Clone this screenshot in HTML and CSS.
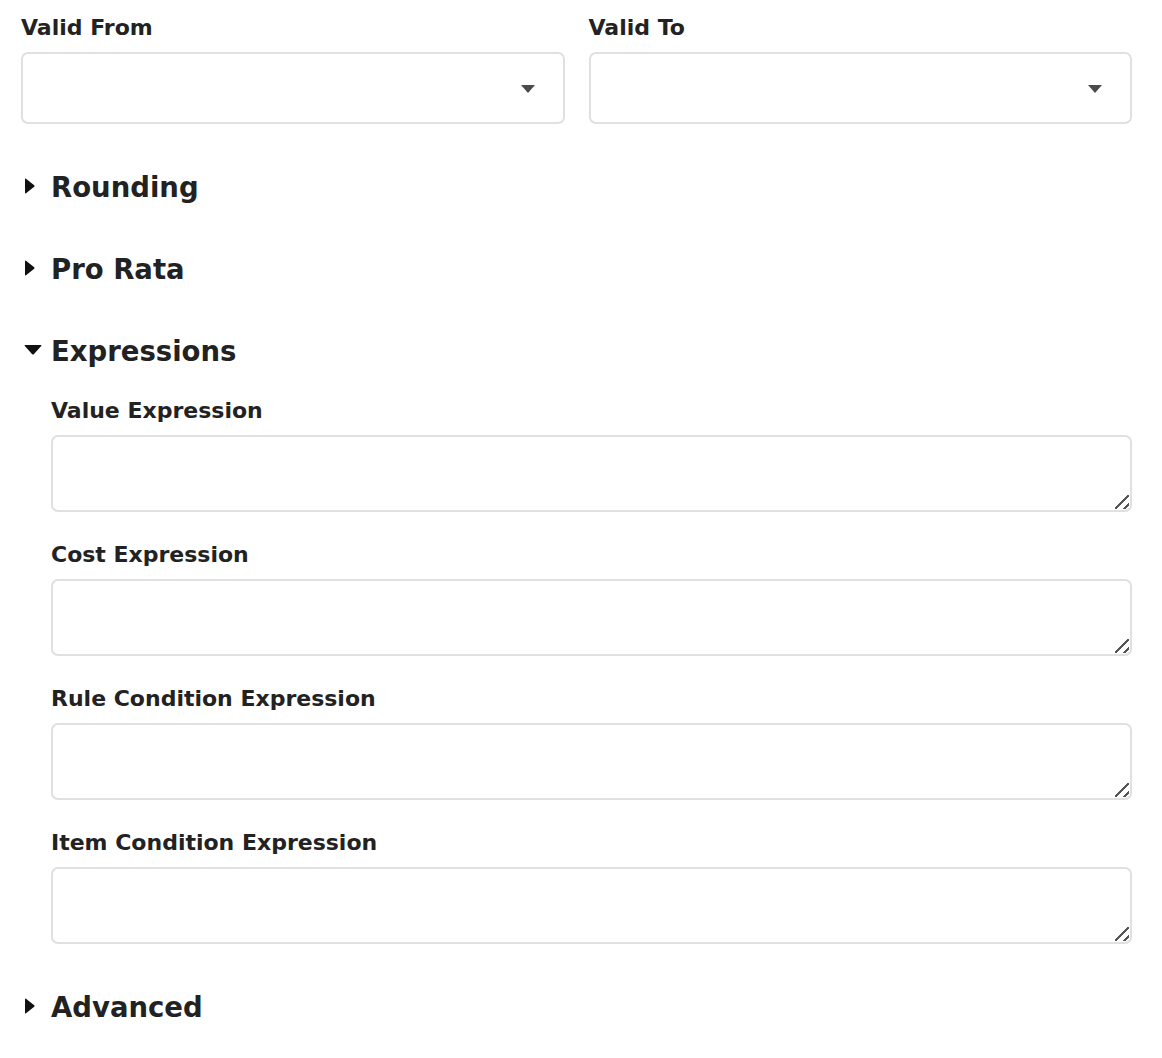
FILE: index.html
```html
<!DOCTYPE html>
<html lang="en">
<head>
<meta charset="utf-8">
<title>Rule form</title>
<link rel="stylesheet" href="styles.css">
</head>
<body>
<div class="form">
  <div class="row">
    <div class="field">
      <label class="label">Valid From</label>
      <div class="select"><svg class="caret" width="14" height="8" viewBox="0 0 14 8"><path d="M0 0H14L7 8Z" fill="#4a4a4a"/></svg></div>
    </div>
    <div class="field">
      <label class="label">Valid To</label>
      <div class="select"><svg class="caret" width="14" height="8" viewBox="0 0 14 8"><path d="M0 0H14L7 8Z" fill="#4a4a4a"/></svg></div>
    </div>
  </div>

  <div class="section">
    <div class="summary"><span class="tri"><svg width="11" height="16" viewBox="0 0 11 16"><path d="M1 1.2Q1 0 2 0.8L10.2 7.2Q11 8 10.2 8.8L2 15.2Q1 16 1 14.8Z" fill="#111"/></svg></span><span class="title">Rounding</span></div>
  </div>

  <div class="section">
    <div class="summary"><span class="tri"><svg width="11" height="16" viewBox="0 0 11 16"><path d="M1 1.2Q1 0 2 0.8L10.2 7.2Q11 8 10.2 8.8L2 15.2Q1 16 1 14.8Z" fill="#111"/></svg></span><span class="title">Pro Rata</span></div>
  </div>

  <div class="section">
    <div class="summary"><span class="tri"><svg width="18" height="10" viewBox="0 0 18 10"><path d="M1.2 0H16.8Q18 0 17.2 0.9L9.8 9.2Q9 10 8.2 9.2L0.8 0.9Q0 0 1.2 0Z" fill="#111"/></svg></span><span class="title">Expressions</span></div>
    <div class="content">
      <div class="field">
        <label class="label">Value Expression</label>
        <div class="textarea"><span class="grip"></span></div>
      </div>
      <div class="field">
        <label class="label">Cost Expression</label>
        <div class="textarea"><span class="grip"></span></div>
      </div>
      <div class="field">
        <label class="label">Rule Condition Expression</label>
        <div class="textarea"><span class="grip"></span></div>
      </div>
      <div class="field">
        <label class="label">Item Condition Expression</label>
        <div class="textarea"><span class="grip"></span></div>
      </div>
    </div>
  </div>

  <div class="section">
    <div class="summary"><span class="tri"><svg width="11" height="16" viewBox="0 0 11 16"><path d="M1 1.2Q1 0 2 0.8L10.2 7.2Q11 8 10.2 8.8L2 15.2Q1 16 1 14.8Z" fill="#111"/></svg></span><span class="title">Advanced</span></div>
  </div>
</div>
</body>
</html>
```

FILE: styles.css
```css
html, body {
  margin: 0;
  padding: 0;
  background: #fff;
}
body {
  font-family: "DejaVu Sans", "Open Sans", sans-serif;
  color: #222;
}
.form {
  padding: 12px 30px 20px 21px;
}
.row {
  display: grid;
  grid-template-columns: 1fr 1fr;
  column-gap: 24px;
}
.field {
  display: flex;
  flex-direction: column;
  gap: 10px;
}
.label {
  font-size: 22px;
  font-weight: 700;
  line-height: 32px;
  height: 30px;
}
.select {
  box-sizing: border-box;
  height: 72px;
  border: 2px solid #e0e0e0;
  border-radius: 7px;
  display: flex;
  align-items: center;
  justify-content: flex-end;
  padding-right: 28px;
}
.caret {
  display: block;
  margin-top: 2px;
}
.section {
  margin-top: 42px;
}
.summary {
  display: flex;
  align-items: center;
  height: 40px;
}
.tri {
  width: 30px;
  display: flex;
  align-items: center;
  padding-left: 3px;
  box-sizing: border-box;
}
.title {
  font-size: 27.5px;
  font-weight: 700;
  line-height: 40px;
  padding-top: 2px;
}
.content {
  margin-top: 25px;
  padding-left: 30px;
  display: flex;
  flex-direction: column;
  gap: 27px;
}
.textarea {
  box-sizing: border-box;
  height: 77px;
  border: 2px solid #e0e0e0;
  border-radius: 7px;
  position: relative;
}
.grip {
  position: absolute;
  right: 1px;
  bottom: 1px;
  width: 14px;
  height: 14px;
  background:
    linear-gradient(135deg, transparent 9px, #555 9px, #555 11px, transparent 11px),
    linear-gradient(135deg, transparent 15px, #555 15px, #555 17px, transparent 17px);
}
```
